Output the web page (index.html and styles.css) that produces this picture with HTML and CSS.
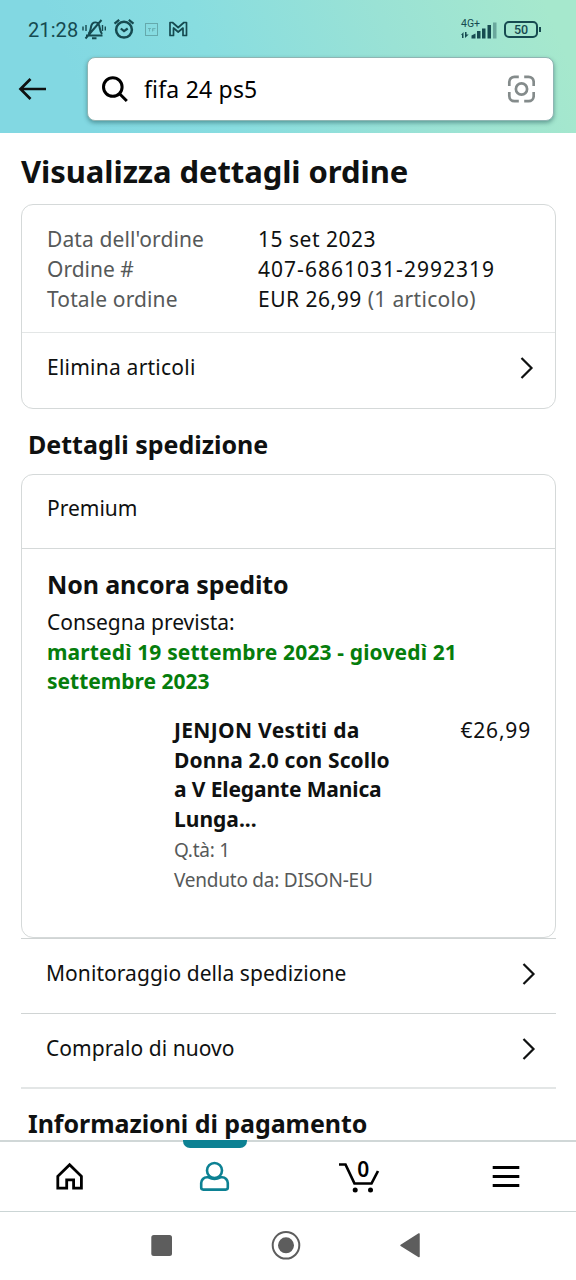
FILE: index.html
```html
<!DOCTYPE html>
<html lang="it">
<head>
<meta charset="utf-8">
<title>Visualizza dettagli ordine</title>
<link rel="stylesheet" href="styles.css">
</head>
<body>
<div class="app">
  <header class="header">
    <div class="status">
      <span class="clock">21:28</span>
      <svg class="status-left" width="112" height="24" viewBox="80 18 112 24" fill="none" stroke="#164a50" stroke-width="2">
        <path d="M86 35.500h16.500M88.500 34c3-3 1.500-8 4-10.500 2-1.700 4.500-1.200 6 .5 1.700 2.500.8 6.500 3.500 10M85.500 38.500 101.500 20M92 38.300h4.500"/>
        <path d="M83 26.500v4M86 25v6M102.500 25v6M105.300 26.500v4" stroke-width="1.400"/>
        <circle cx="124" cy="29.700" r="7.900" stroke-width="2.500"/>
        <path d="m120.800 28.500 3.200 2.700 3.700-2.700M114.500 23.700l4.700-3.900M133.500 23.700l-4.700-3.900" stroke-width="2.200"/>
        <rect x="145.500" y="23.500" width="12" height="12" stroke="#65a9ac" stroke-width="1"/>
        <path d="M148 28.500h3M149.500 28.500v3M152.500 31.500v-3h3M152.500 30h2" stroke="#65a9ac" stroke-width=".8"/>
        <path d="M170 35.500v-13h2.500l5.700 5 5.700-5h2.600v13h-3.500v-7.500l-4.800 4-4.700-4v7.500Z" stroke-width="1.700" stroke-linejoin="round"/>
      </svg>
      <div class="network">
        <span class="network-type">4G+</span>
        <svg width="36" height="18" viewBox="461 21 36 18" fill="#164a50">
          <path d="m461 35 2.500-3v6h-1.500v-3ZM465 32h1.500v2.500h2.200L465 38ZM471.500 35.500l4-2v5h-4ZM477 31h3.500v7.500H477ZM482 28.500h3.500v10H482ZM487.500 25h3.500v13.500h-3.500Z"/>
          <path d="M493 22.500h3.500v16H493Z" opacity=".4"/>
        </svg>
      </div>
      <div class="battery"><span>50</span></div>
    </div>
    <div class="search-row">
      <svg class="back" width="30" height="24" viewBox="0 0 30 24" fill="none" stroke="#0f1111" stroke-width="2.700"><path d="M28 12H2.500M12.500 2l-10 10 10 10"/></svg>
      <div class="search">
        <svg width="28" height="28" viewBox="0 0 28 28" fill="none" stroke="#000" stroke-width="3"><circle cx="10.800" cy="12" r="9.300"/><path d="m17.300 18.500 7.500 7.500"/></svg>
        <span class="query">fifa 24 ps5</span>
        <svg width="28" height="28" viewBox="0 0 28 28" fill="none" stroke="#848b8b" stroke-width="2.700"><circle cx="14.500" cy="14" r="5.600"/><path d="M2.300 11V7a5.200 5.200 0 0 1 5.200-5.200h4.300M17.200 1.800h4.300A5.200 5.200 0 0 1 26.700 7v4M26.700 17v4a5.200 5.200 0 0 1-5.200 5.200h-4.300M11.800 26.200H7.500A5.200 5.200 0 0 1 2.300 21v-4"/></svg>
      </div>
    </div>
  </header>

  <main class="content">
    <h1 class="title">Visualizza dettagli ordine</h1>

    <section class="card">
      <dl class="summary">
        <dt class="ls-1">Data dell'ordine</dt><dd class="ls-5">15 set 2023</dd>
        <dt>Ordine #</dt><dd class="ls-10">407-6861031-2992319</dd>
        <dt class="ls-1">Totale ordine</dt><dd class="ls-5">EUR 26,99 <span class="muted ls-3">(1 articolo)</span></dd>
      </dl>
      <a class="card-link"><span class="ls-2">Elimina articoli</span>
        <svg class="chevron" width="14" height="24" viewBox="0 0 14 24"><path d="m1.500 2 10 10-10 10"/></svg></a>
    </section>

    <h2 class="heading">Dettagli spedizione</h2>

    <section class="card">
      <div class="speed">Premium</div>
      <div class="shipment">
        <h3 class="state">Non ancora spedito</h3>
        <p class="line">Consegna prevista:</p>
        <p class="line date">martedì 19 settembre 2023 - giovedì 21<br><span class="ls-0">settembre 2023</span></p>
        <div class="product">
          <div class="product-info">
            <p class="name"><span class="ls-3">JENJON Vestiti da</span><br><span class="ls-1">Donna 2.0 con Scollo</span><br><span class="tight">a V Elegante Manica</span><br>Lunga...</p>
            <p class="meta">Q.tà: 1</p>
            <p class="meta">Venduto da: DISON-EU</p>
          </div>
          <span class="price">€26,99</span>
        </div>
      </div>
    </section>

    <nav class="actions">
      <a class="action">Monitoraggio della spedizione
        <svg class="chevron" width="14" height="24" viewBox="0 0 14 24"><path d="m1.500 2 10 10-10 10"/></svg></a>
      <a class="action">Compralo di nuovo
        <svg class="chevron" width="14" height="24" viewBox="0 0 14 24"><path d="m1.500 2 10 10-10 10"/></svg></a>
    </nav>

    <h2 class="heading payment">Informazioni di pagamento</h2>
  </main>

  <nav class="tabs">
    <a class="tab"><svg width="40" height="40" viewBox="0 0 40 40" fill="none" stroke="#000" stroke-width="2.800"><path d="M7.800 32.200V20.300L19.600 8.700l11.800 11.600v11.900h-7.800v-8.400h-6.900v8.400Z"/></svg></a>
    <a class="tab tab-active"><svg width="40" height="40" viewBox="0 0 40 40" fill="none" stroke="#0c8193" stroke-width="2.600"><circle cx="19.500" cy="14.500" r="7.500"/><path d="M13.500 21.300h-1.500a5.800 5.800 0 0 0-5.800 5.800v4.500a2 2 0 0 0 2 2h22.600a2 2 0 0 0 2-2v-4.500a5.800 5.800 0 0 0-5.800-5.800h-1.500Q19.500 24.500 13.500 21.300Z"/></svg></a>
    <a class="tab"><svg width="40" height="40" viewBox="0 0 40 40" fill="none" stroke="#000" stroke-width="2.700"><path d="M-2 8.500h6.500l9 19h17L37 15"/><g fill="#000" stroke="none"><circle cx="14.200" cy="34" r="2.500"/><circle cx="29.500" cy="34" r="2.500"/></g></svg><span class="count">0</span></a>
    <a class="tab"><svg width="40" height="40" viewBox="0 0 40 40" stroke="#000" stroke-width="2.800"><path d="M6.700 11.500h26.600M6.700 20.500h26.600M6.700 29.500h26.600"/></svg></a>
  </nav>

  <footer class="system">
    <svg width="270" height="30" viewBox="151 1230 270 30" fill="#5d5d5d">
      <rect x="151.300" y="1235" width="20.700" height="21" rx="2.500"/>
      <circle cx="286" cy="1245.300" r="13.300" fill="none" stroke="#5d5d5d" stroke-width="2"/>
      <circle cx="286" cy="1245.300" r="8"/>
      <path d="M401 1245.300 419 1234v22.600Z" stroke="#5d5d5d" stroke-width="1.500" stroke-linejoin="round"/>
    </svg>
  </footer>
</div>
</body>
</html>
```

FILE: styles.css
```css
* { box-sizing: border-box; }
body {
  margin: 0;
  background: #fff;
  color: #0f1111;
  font-family: "Noto Sans", "Open Sans", sans-serif;
  font-size: 21px;
  line-height: 30px;
}
h1, h2, h3, p, dl, dd { margin: 0; }
.app { display: flex; flex-direction: column; width: 576px; height: 1280px; overflow: hidden; }

/* Header */
.header { flex: none; height: 133px; background: linear-gradient(68deg, #82d8e2 15%, #88dde0 38%, #9ae2d5 68%, #a6e8cd 95%); }
.status { display: flex; align-items: center; height: 57px; padding: 2px 34px 0 28px; color: #164a50; }
.clock { width: 52px; font: 400 20px/24px Roboto, sans-serif; letter-spacing: .1px; }
.status-left { flex: none; }
.network { display: flex; position: relative; margin-left: 269px; }
.network-type { position: absolute; left: 0; top: -2px; font: 10.5px/10px Roboto, sans-serif; }
.battery {
  position: relative;
  display: flex; justify-content: center; align-items: center;
  width: 34px; height: 17px; margin-left: 7px;
  border: 2px solid #164a50; border-radius: 5px;
  font: 500 12.5px/13px Roboto, sans-serif;
}
.battery::after { content: ""; position: absolute; right: -5px; top: 4px; width: 2px; height: 5px; background: #164a50; }
.search-row { display: flex; align-items: center; padding: 0 22px 0 18px; }
.back { flex: none; margin-right: 39px; }
.search {
  display: flex; flex: 1; align-items: center;
  height: 64px; padding: 0 18px 0 14px;
  background: #fff; border: 1px solid #8fb5b3; border-radius: 8px;
  box-shadow: 0 2px 4px rgba(20, 70, 75, .45);
}
.query { flex: 1; margin: -1px 0 0 14px; font-size: 23px; letter-spacing: .2px; color: #000; }

/* Content */
.content { flex: none; height: 1007px; padding: 17px 20px 0 21px; overflow: hidden; }
.title { height: 54px; font-size: 31px; line-height: 42px; letter-spacing: -.08px; white-space: nowrap; }
.card { border: 1px solid #d5d9d9; border-radius: 12px; }
.summary { display: grid; grid-template-columns: 211px 1fr; height: 127px; padding: 18.600px 0 0 25px; align-content: start; }
.summary dt, .muted { color: #565959; }
.card-link { display: flex; align-items: center; justify-content: space-between; height: 76px; padding: 0 21px 8px 25px; border-top: 1px solid #e3e6e6; }
.chevron { flex: none; fill: none; stroke: #0f1111; stroke-width: 2.2px; }
.card-link .chevron { margin-top: 2px; }
.heading { height: 65px; padding: 18px 0 0 7px; font-size: 25px; line-height: 34px; letter-spacing: 0; white-space: nowrap; }
.speed { height: 73px; padding: 18px 0 0 25px; }
.shipment { height: 389px; padding: 18px 25px 0; border-top: 1px solid #d5d9d9; }
.state { font-size: 25px; line-height: 34px; letter-spacing: -.12px; padding-bottom: 7px; }
.line { line-height: 29.6px; white-space: nowrap; }
.date { color: #067d0c; font-weight: 700; letter-spacing: .14px; }
.product { display: flex; justify-content: space-between; padding: 19px 0 0 127px; line-height: 29.8px; white-space: nowrap; }
.name { font-weight: 700; padding-bottom: 1px; }
.meta { font-size: 19px; letter-spacing: -.23px; color: #565959; }
.price { letter-spacing: .8px; margin-right: -1px; }
.action { display: flex; align-items: center; justify-content: space-between; height: 75px; padding: 0 20px 6px 25px; border-top: 1px solid #d0d4d4; letter-spacing: .06px; }
.action .chevron { margin-top: 1px; }
.payment { border-top: 2px solid #e3e6e6; margin-top: -1px; padding: 17px 0 0 7px; height: 54px; letter-spacing: -.06px; }

/* Optical letter spacing */
.ls-0 { letter-spacing: 0; }
.ls-1 { letter-spacing: .12px; }
.ls-2 { letter-spacing: .23px; }
.ls-3 { letter-spacing: .32px; }
.ls-5 { letter-spacing: .5px; }
.ls-10 { letter-spacing: 1.02px; }
.tight { letter-spacing: -.13px; }

/* Bottom tabs */
.tabs { display: flex; flex: none; justify-content: space-between; height: 72px; padding: 14px 50px 0; border-top: 2px solid #d0d7d7; border-bottom: 1px solid #cbd5d5; background: #fff; }
.tab { position: relative; width: 40px; height: 40px; }
.tab svg { display: block; overflow: visible; }
.tab-active::before { content: ""; position: absolute; left: -12px; top: -16px; width: 64px; height: 8px; background: #0c8193; border-radius: 0 0 7px 7px; }
.count { position: absolute; left: 16px; top: 1px; width: 13px; text-align: center; font-size: 21px; line-height: 24px; font-weight: 600; color: #000; }
.system { display: flex; padding: 18px 0 0 151px; }
```
